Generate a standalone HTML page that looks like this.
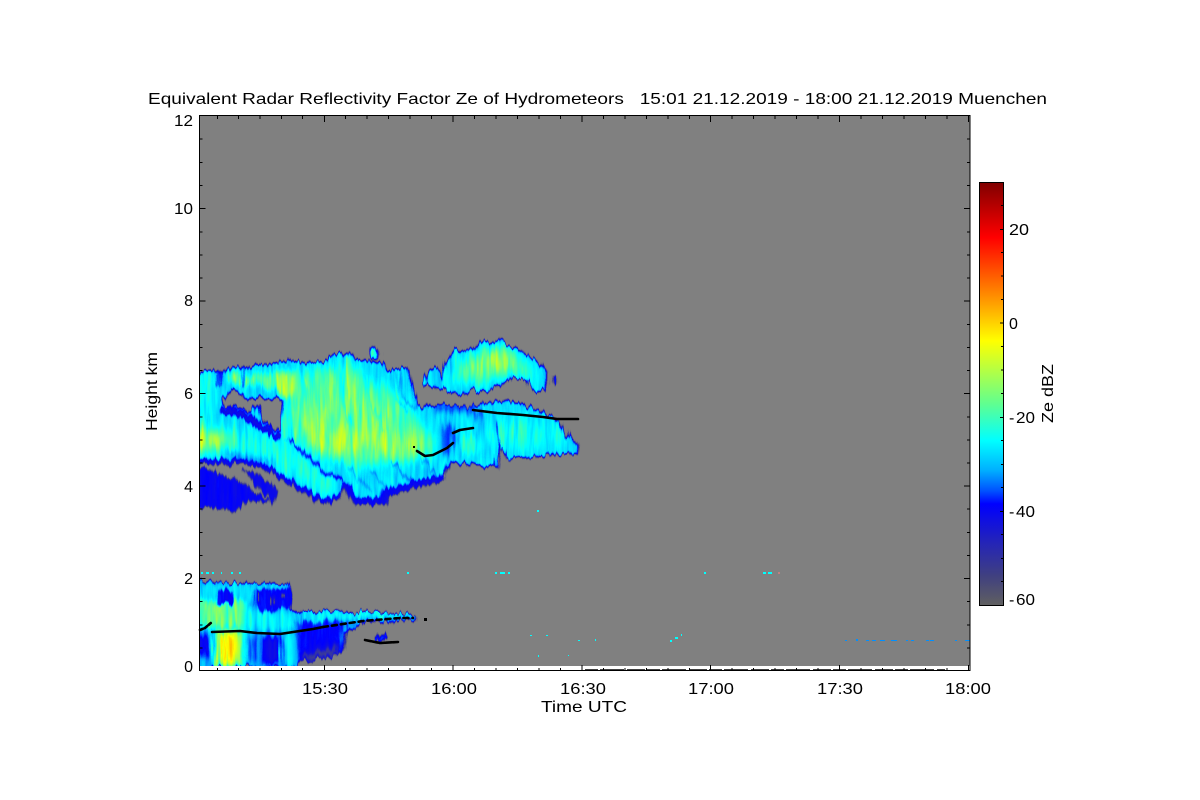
<!DOCTYPE html>
<html><head><meta charset="utf-8"><title>Radar Reflectivity</title>
<style>
html,body{margin:0;padding:0;background:#fff;width:1200px;height:800px;overflow:hidden}
svg{display:block}
text{font-family:"Liberation Sans",sans-serif;font-size:16px;fill:#000}
</style></head><body>
<svg width="1200" height="800" viewBox="0 0 1200 800" xmlns="http://www.w3.org/2000/svg">
<defs>
<linearGradient id="cb" x1="0" y1="0" x2="0" y2="1">
<stop offset="0" stop-color="#800000"/><stop offset=".13" stop-color="#ff0000"/><stop offset=".286" stop-color="#ffa000"/><stop offset=".374" stop-color="#ffff00"/><stop offset=".523" stop-color="#60ff90"/><stop offset=".61" stop-color="#00ffff"/><stop offset=".68" stop-color="#00b0ff"/><stop offset=".73" stop-color="#0050ff"/><stop offset=".76" stop-color="#0000ff"/><stop offset=".84" stop-color="#2020c0"/><stop offset=".93" stop-color="#404080"/><stop offset="1" stop-color="#606060"/>
</linearGradient>
<clipPath id="up"><path d="M185 375 L200 375 210 370 218 372 222 372 233 367 242 368 245 370 248 367 278 363 287 361 307 363 327 362 330 355 350 355 357 360 382 363 387 372 407 368 412 387 417 408 443 405 467 408 507 400 537 410 560 422 568 437 578 445 577 453 553 454 533 457 507 458 500 443 497 467 483 467 470 463 450 462 445 477 439 480 412 487 386 495 384 503 356 503 349 487 344 482 339 498 322 502 299 488 266 468 239 462 219 462 199 463 185 464 Z"/></clipPath>
<clipPath id="tr"><path d="M423 385 L430 370 438 368 442 380 447 360 457 350 467 353 480 343 498 340 510 345 523 352 537 362 545 370 545 392 533 390 527 380 513 377 500 385 490 390 480 393 473 390 460 395 447 390 438 387 430 388Z"/></clipPath>
<clipPath id="lo"><path d="M185 582 L287 585 292 593 290 610 303 613 323 612 413 615 413 619 363 623 345 632 342 650 330 658 300 660 292 667 185 667Z"/></clipPath>
<filter id="b1" filterUnits="userSpaceOnUse" x="150" y="100" width="900" height="600" color-interpolation-filters="sRGB"><feGaussianBlur stdDeviation="1"/></filter>
<filter id="b3" filterUnits="userSpaceOnUse" x="150" y="100" width="900" height="600" color-interpolation-filters="sRGB"><feGaussianBlur stdDeviation="3"/></filter>
<filter id="b6" filterUnits="userSpaceOnUse" x="150" y="100" width="900" height="600" color-interpolation-filters="sRGB"><feGaussianBlur stdDeviation="6"/></filter>
<filter id="b10" filterUnits="userSpaceOnUse" x="150" y="100" width="900" height="600" color-interpolation-filters="sRGB"><feGaussianBlur stdDeviation="10"/></filter>
<filter id="cm" filterUnits="userSpaceOnUse" x="199" y="116" width="771" height="550" color-interpolation-filters="sRGB">
<feTurbulence type="fractalNoise" baseFrequency="0.24 0.022" numOctaves="3" seed="11" result="n"/>
<feDisplacementMap in="SourceGraphic" in2="n" scale="11" xChannelSelector="R" yChannelSelector="G" result="d"/>
<feColorMatrix in="n" type="matrix" values="1 0 0 0 0 1 0 0 0 0 1 0 0 0 0 0 0 0 0 1" result="g"/>
<feComposite in="d" in2="g" operator="arithmetic" k1="0.5" k2="0.75" k3="0" k4="0" result="m"/>
<feComponentTransfer in="m">
<feFuncR type="table" tableValues=".502 .251 .063 0 0 0 0 0 .188 .376 .627 .816 1 1 1 1 1 1 .753 .627 .502"/>
<feFuncG type="table" tableValues=".502 .251 .063 0 .314 .627 .847 1 1 1 1 1 1 .816 .627 .439 .188 0 0 0 0"/>
<feFuncB type="table" tableValues=".502 .565 .878 1 1 1 1 1 .753 .565 .314 .125 0 0 0 0 0 0 0 0 0"/>
</feComponentTransfer>
</filter>
</defs>
<rect width="1200" height="800" fill="#fff"/>
<rect x="199" y="116" width="771" height="550" fill="#808080"/>

<g filter="url(#cm)">
<rect x="150" y="100" width="900" height="600" fill="#000"/>
<!-- upper cloud silhouette -->
<path filter="url(#b1)" fill="#505050" d="M185 375 L200 375 210 370 218 372 222 372 233 367 242 368 245 370 248 367 278 363 287 361 307 363 327 362 330 355 350 355 357 360 382 363 387 372 407 368 412 387 417 408 443 405 467 408 507 400 537 410 560 422 568 437 578 445 577 453 553 454 533 457 507 458 500 443 497 467 483 467 470 463 450 462 445 477 439 480 412 487 386 495 384 503 356 503 349 487 344 482 339 498 322 502 299 488 266 468 239 462 219 462 199 463 185 464 Z"/>
<!-- blue lower left -->
<path filter="url(#b1)" fill="#222" d="M185 468 L210 470 230 477 250 490 260 495 270 503 250 500 233 512 210 507 185 507Z"/>
<path filter="url(#b1)" fill="#1e1e1e" d="M243 472 L255 473 278 490 273 503 260 490Z"/>
<g clip-path="url(#up)">
<!-- right lower interior -->
<ellipse cx="522" cy="435" rx="42" ry="14" fill="#5e5e5e" filter="url(#b6)"/>
<ellipse cx="470" cy="445" rx="12" ry="10" fill="#606060" filter="url(#b3)"/>
<ellipse cx="447" cy="440" rx="7" ry="16" fill="#303030" filter="url(#b3)"/>
<path d="M496 420 L500 445" stroke="#2a2a2a" stroke-width="3" filter="url(#b1)"/>
<path d="M434 408 L470 408 480 416" stroke="#303030" stroke-width="8" fill="none" filter="url(#b3)"/>
<!-- main body -->
<path filter="url(#b6)" fill="#6c6c6c" d="M288 395 L300 372 350 366 380 382 405 407 438 440 430 458 400 462 356 466 325 452 296 428Z"/>
<ellipse cx="345" cy="425" rx="56" ry="30" fill="#767676" filter="url(#b10)"/>
<ellipse cx="340" cy="440" rx="28" ry="12" fill="#828282" filter="url(#b6)"/>
<ellipse cx="398" cy="444" rx="24" ry="12" fill="#808080" filter="url(#b6)"/>
<g fill="none" filter="url(#b1)">
<path stroke="#767676" stroke-width="2" d="M348 358 L352 395 365 430"/>
<path stroke="#5c5c5c" stroke-width="2" d="M338 360 L342 398 350 425"/>
<path stroke="#606060" stroke-width="2" d="M360 368 L372 405 385 430"/>
<path stroke="#787878" stroke-width="2" d="M305 375 L318 420 330 450"/>
<path stroke="#4c4c4c" stroke-width="2" d="M390 375 L398 400 408 412"/>
<path stroke="#3c3c3c" stroke-width="2" d="M397 372 L404 398 416 410"/>
<path stroke="#3c3c3c" stroke-width="2" d="M370 470 L388 490"/>
<path stroke="#343434" stroke-width="2" d="M392 462 L412 482"/>
<path stroke="#383838" stroke-width="2" d="M420 455 L436 476"/>
<path stroke="#3c3c3c" stroke-width="2" d="M350 468 L372 492"/>
</g>
<!-- top band -->
<path filter="url(#b3)" fill="#707070" d="M226 378 L280 372 298 372 294 392 250 386 Z"/>
<ellipse cx="287" cy="385" rx="9" ry="13" fill="#858585" filter="url(#b3)"/>
<ellipse cx="209" cy="380" rx="7" ry="8" fill="#5a5a5a" filter="url(#b3)"/>
<ellipse cx="236" cy="378" rx="8" ry="6" fill="#757575" filter="url(#b3)"/>
<path d="M219 368 L219 386 M245 366 L245 388" stroke="#1c1c1c" stroke-width="2" filter="url(#b1)"/>
<!-- left -->
<path filter="url(#b3)" fill="#585858" d="M185 378 L214 378 214 425 185 425Z"/>
<path filter="url(#b6)" fill="#868686" d="M185 422 L222 432 238 446 195 452 185 452Z"/>
<!-- slanted band -->
<path fill="none" stroke="#606060" stroke-width="22" filter="url(#b6)" d="M232 438 L265 446 298 466 332 490"/>
</g>
<!-- rims and pocket painted on top -->
<path filter="url(#b1)" fill="none" stroke="#1e1e1e" stroke-width="5" d="M185 463 L219 461 239 461 266 467 299 487 322 501 339 497"/>
<path filter="url(#b1)" fill="none" stroke="#202020" stroke-width="7" d="M344 482 L349 489 356 501 384 501 386 493 412 485 439 478 445 475"/>
<path filter="url(#b1)" fill="none" stroke="#1c1c1c" stroke-width="7" d="M220 412 L233 411 251 418 262 426 279 437"/>
<path filter="url(#b1)" fill="none" stroke="#222" stroke-width="3" d="M289 440 L303 452 322 470 343 482"/>
<path filter="url(#b3)" fill="none" stroke="#2c2c2c" stroke-width="3" d="M226 452 L250 460 272 462"/>
<path filter="url(#b1)" fill="#000" d="M222 399 L231 390 244 393 246 399 276 398 283 399 282 415 280 431 271 427 262 418 259 408 254 406 251 413 236 407 224 407 Z"/>
<!-- top-right cloud -->
<path filter="url(#b1)" fill="#505050" d="M423 385 L430 370 438 368 442 380 447 360 457 350 467 353 480 343 498 340 510 345 523 352 537 362 545 370 545 392 533 390 527 380 513 377 500 385 490 390 480 393 473 390 460 395 447 390 438 387 430 388Z"/>
<g clip-path="url(#tr)">
<path filter="url(#b6)" fill="#727272" d="M452 380 L462 360 500 348 530 368 537 380 505 372 480 385Z"/>
<ellipse cx="497" cy="360" rx="18" ry="10" fill="#808080" filter="url(#b6)"/>
</g>
<rect x="553" y="377" width="3" height="8" fill="#3a3a3a" filter="url(#b1)"/>
<ellipse cx="375" cy="354" rx="4" ry="5" fill="#5a5a5a" filter="url(#b1)"/>

<!-- bottom -->
<path filter="url(#b1)" fill="#444" d="M185 582 L287 585 292 593 290 610 303 613 323 612 413 615 413 619 363 623 345 632 342 650 330 658 300 660 292 667 185 667Z"/>
<g clip-path="url(#lo)">
<path filter="url(#b3)" fill="#262626" d="M296 622 L345 622 340 640 328 650 296 652Z"/>
<path filter="url(#b3)" fill="#0e0e0e" d="M325 648 L342 640 338 658 300 662 300 652Z"/>
<path filter="url(#b1)" fill="#505050" d="M300 612 L413 614 413 618 370 620 300 622Z"/>
<path filter="url(#b1)" fill="#5a5a5a" d="M325 613 L400 614 400 617 325 619Z"/>
<path filter="url(#b3)" fill="#747474" d="M188 597 L246 597 246 628 188 628Z"/>
<path filter="url(#b3)" fill="#505050" d="M190 583 L258 583 258 600 190 600Z"/>
<path filter="url(#b1)" fill="#262626" d="M218 590 L232 590 234 603 218 605Z"/>
<path filter="url(#b3)" fill="#565656" d="M245 610 L290 612 298 630 245 630Z"/>
<path filter="url(#b1)" fill="#262626" d="M254 590 L292 588 292 607 262 612 254 605Z"/>
<path filter="url(#b1)" fill="#000" d="M258 592 L261 592 261 602 258 602Z M270 596 L274 594 274 602 270 604Z M282 594 L285 594 285 598 282 600Z"/>
<path filter="url(#b1)" fill="#4c4c4c" d="M250 584 L287 585 288 588 250 588Z"/>
<path filter="url(#b3)" fill="#808080" d="M214 630 L244 630 244 667 214 667Z"/>
<ellipse cx="229" cy="648" rx="8" ry="16" fill="#a0a0a0" filter="url(#b3)"/>
<path filter="url(#b3)" fill="#1e1e1e" d="M190 636 L210 636 208 656 190 654Z"/>
<path filter="url(#b3)" fill="#1c1c1c" d="M263 636 L280 636 282 664 263 664Z"/>
<path filter="url(#b3)" fill="#303030" d="M247 640 L257 636 256 660 248 662Z"/>
<rect x="283" y="634" width="12" height="30" fill="#545454" filter="url(#b3)"/>
</g>
<ellipse cx="382" cy="638" rx="6" ry="3" fill="#2c2c2c" filter="url(#b1)"/>
</g>

<!-- specks -->
<g fill="#00ffff">
<rect x="201" y="572" width="2" height="2"/><rect x="206" y="572" width="3" height="2"/><rect x="212" y="572" width="2" height="2"/><rect x="221" y="572" width="1" height="2"/><rect x="231" y="572" width="2" height="2"/><rect x="239" y="572" width="2" height="2"/><rect x="407" y="572" width="2" height="2"/><rect x="495" y="572" width="2" height="2"/><rect x="500" y="572" width="5" height="2"/><rect x="508" y="572" width="2" height="2"/><rect x="704" y="572" width="2" height="2"/><rect x="763" y="572" width="3" height="2"/><rect x="768" y="572" width="4" height="2"/><rect x="537" y="510" width="2" height="2"/><rect x="530" y="635" width="2" height="1"/><rect x="546" y="635" width="2" height="1"/><rect x="578" y="640" width="2" height="1"/><rect x="595" y="639" width="1" height="2"/><rect x="670" y="640" width="2" height="2"/><rect x="675" y="637" width="3" height="2"/><rect x="681" y="634" width="1" height="2"/><rect x="538" y="655" width="1" height="2"/><rect x="568" y="655" width="1" height="1"/>
</g>
<rect x="778" y="572" width="2" height="2" fill="#c08080"/>
<g fill="#0090ff">
<rect x="845" y="640" width="2" height="1"/><rect x="856" y="639" width="2" height="2"/><rect x="866" y="640" width="3" height="1"/><rect x="872" y="640" width="4" height="1"/><rect x="880" y="640" width="5" height="1"/><rect x="891" y="640" width="6" height="1"/><rect x="906" y="640" width="2" height="1"/><rect x="911" y="640" width="3" height="1"/><rect x="926" y="640" width="3" height="1"/><rect x="930" y="640" width="4" height="1"/><rect x="955" y="640" width="2" height="1"/><rect x="965" y="640" width="5" height="1"/>
</g>

<!-- black lines -->
<g fill="none" stroke="#000" stroke-width="2.6" stroke-linejoin="round" stroke-linecap="round">
<polyline points="473,410 497,413 523,415 543,417 557,419 578,419"/>
<polyline points="453,433 460,430 473,428"/>
<polyline points="417,451 425,456 433,455 447,448 453,443"/>
<polyline points="200,630 205,628 212,622" stroke-dasharray="3 2"/>
<polyline points="212,632 240,631 257,633 280,634 313,629 323,627"/>
<polyline points="323,627 363,621 400,618 413,618" stroke-dasharray="5 4"/>
<polyline points="365,640 380,643 398,642" stroke-dasharray="6 1"/>
</g>
<rect x="413" y="446" width="2" height="2"/><rect x="424" y="618" width="3" height="3"/>

<!-- bottom dashes -->
<path d="M585 670H945" stroke="#000" stroke-width="1.5" stroke-dasharray="13 2 24 3 18 2" fill="none"/>

<!-- axes -->
<rect x="199.5" y="115.5" width="770.5" height="555" fill="none" stroke="#000" stroke-width="1"/>
<path stroke="#000" stroke-width="1" fill="none" d="M199.5 648h3M199.5 625h3M199.5 601.5h3M199.5 578.5h6M199.5 555.5h3M199.5 532.5h3M199.5 509h3M199.5 486h6M199.5 463h3M199.5 440h3M199.5 417h3M199.5 393.5h6M199.5 370.5h3M199.5 347.5h3M199.5 324.5h3M199.5 301h6M199.5 278h3M199.5 255h3M199.5 232h3M199.5 208.5h6M199.5 185.5h3M199.5 162.5h3M199.5 139h3
M970 578.5h-6M970 648h-3M970 625h-3M970 601.5h-3M970 555.5h-3M970 532.5h-3M970 509h-3M970 486h-6M970 463h-3M970 440h-3M970 417h-3M970 393.5h-6M970 370.5h-3M970 347.5h-3M970 324.5h-3M970 301h-6M970 278h-3M970 255h-3M970 232h-3M970 208.5h-6M970 185.5h-3M970 162.5h-3M970 139h-3
M217.5 116v3M238.5 116v3M260 116v3M281.5 116v3M302.5 116v3M324.5 116v6M345.5 116v3M367 116v3M388.5 116v3M410 116v3M431.5 116v3M453 116v6M474.5 116v3M496 116v3M517.5 116v3M539 116v3M560.5 116v3M582 116v6M603.5 116v3M625 116v3M646.5 116v3M668 116v3M689.5 116v3M710.5 116v6M732 116v3M753.5 116v3M775 116v3M796.5 116v3M818 116v3M839.5 116v6M861 116v3M882.5 116v3M904 116v3M925.5 116v3M947 116v3M968.5 116v6
M217.5 671v-3M238.5 671v-3M260 671v-3M281.5 671v-3M302.5 671v-3M324.5 671v-6M345.5 671v-3M367 671v-3M388.5 671v-3M410 671v-3M431.5 671v-3M453 671v-6M474.5 671v-3M496 671v-3M517.5 671v-3M539 671v-3M560.5 671v-3M582 671v-6M603.5 671v-3M625 671v-3M646.5 671v-3M668 671v-3M689.5 671v-3M710.5 671v-6M732 671v-3M753.5 671v-3M775 671v-3M796.5 671v-3M818 671v-3M839.5 671v-6M861 671v-3M882.5 671v-3M904 671v-3M925.5 671v-3M947 671v-3M968.5 671v-6"/>

<!-- colorbar -->
<rect x="979.5" y="182.5" width="24" height="423" fill="url(#cb)" stroke="#000" stroke-width="1"/>
<path stroke="#000" stroke-width="1" fill="none" d="M1003 205.5h-2M1003 229.5h-3M1003 252.5h-2M1003 276h-2M1003 299.5h-2M1003 323h-3M1003 346.5h-2M1003 370h-2M1003 393.5h-2M1003 417.5h-3M1003 440.5h-2M1003 464.5h-2M1003 487.5h-2M1003 511.5h-3M1003 534.5h-2M1003 558.5h-2M1003 581.5h-2"/>

<!-- text -->
<text x="148" y="104" textLength="899" lengthAdjust="spacingAndGlyphs">Equivalent Radar Reflectivity Factor Ze of Hydrometeors&#160;&#160;&#160;15:01 21.12.2019 - 18:00 21.12.2019 Muenchen</text>
<text x="174" y="126" textLength="19" lengthAdjust="spacingAndGlyphs">12</text>
<text x="174" y="214" textLength="19" lengthAdjust="spacingAndGlyphs">10</text>
<g text-anchor="end">
<text x="193" y="306">8</text>
<text x="193" y="399">6</text>
<text x="193" y="492">4</text>
<text x="193" y="584">2</text>
<text x="193" y="672">0</text>
</g>
<text x="302" y="694" textLength="46" lengthAdjust="spacingAndGlyphs">15:30</text>
<text x="431" y="694" textLength="46" lengthAdjust="spacingAndGlyphs">16:00</text>
<text x="560" y="694" textLength="46" lengthAdjust="spacingAndGlyphs">16:30</text>
<text x="688" y="694" textLength="46" lengthAdjust="spacingAndGlyphs">17:00</text>
<text x="817" y="694" textLength="46" lengthAdjust="spacingAndGlyphs">17:30</text>
<text x="945" y="694" textLength="46" lengthAdjust="spacingAndGlyphs">18:00</text>
<text x="541" y="712" textLength="86" lengthAdjust="spacingAndGlyphs">Time UTC</text>
<text transform="translate(157,431) rotate(-90)" textLength="79" lengthAdjust="spacingAndGlyphs">Height km</text>
<text transform="translate(1053,423) rotate(-90)" textLength="59" lengthAdjust="spacingAndGlyphs">Ze dBZ</text>
<text x="1009" y="235" textLength="20" lengthAdjust="spacingAndGlyphs">20</text>
<text x="1009" y="329">0</text>
<text x="1009" y="423">-</text><text x="1016" y="423" textLength="19" lengthAdjust="spacingAndGlyphs">20</text>
<text x="1009" y="517">-</text><text x="1016" y="517" textLength="19" lengthAdjust="spacingAndGlyphs">40</text>
<text x="1009" y="605">-</text><text x="1016" y="605" textLength="19" lengthAdjust="spacingAndGlyphs">60</text>
</svg>
</body></html>
